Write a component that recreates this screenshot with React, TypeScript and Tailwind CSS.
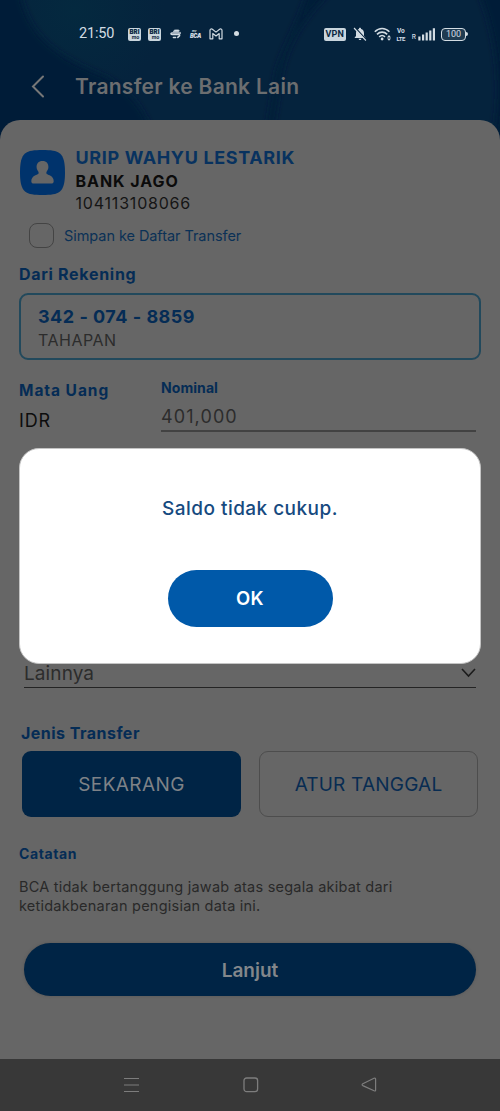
import type { ReactNode } from 'react'

function HeaderBackdrop() {
  return (
    <svg
      className="absolute inset-0 h-full w-full"
      viewBox="0 0 500 150"
      preserveAspectRatio="none"
      aria-hidden="true"
    >
      <defs>
        <filter id="soft" x="-20%" y="-20%" width="140%" height="140%">
          <feGaussianBlur stdDeviation="3" />
        </filter>
        <radialGradient id="teal" cx="75" cy="10" r="90" gradientUnits="userSpaceOnUse">
          <stop offset="0" stopColor="#04293f" />
          <stop offset="1" stopColor="#05233d" />
        </radialGradient>
      </defs>
      <rect width="500" height="150" fill="url(#teal)" />
      <g filter="url(#soft)">
        <path d="M-20 -20H18C24 32 50 54 104 76C130 90 150 112 160 160H-20Z" fill="#061f39" />
        <path d="M308 -10H332C304 16 288 44 282 72L268 160H262L276 72C284 44 300 20 308 -10Z" fill="#061e38" />
        <path d="M478 -10H520V160H488C504 100 500 44 478 -10Z" fill="#061d37" />
      </g>
    </svg>
  )
}

function BriIcon() {
  return (
    <div className="flex h-[13px] w-[13px] flex-col items-center justify-center rounded-[2px] bg-[#c9d5dd] text-[#0b2740]">
      <span className="text-[6px] leading-[6px] font-black">BRI</span>
      <span className="ml-[2px] text-[5px] leading-[5px] font-bold">mo</span>
    </div>
  )
}

function StatusBar() {
  return (
    <div className="relative flex h-[68px] items-center text-[#d3dce3]">
      <span className="ml-[79px] w-[49px] font-[family-name:Roboto] text-[14.5px] leading-5 tracking-[-0.2px]">
        21:50
      </span>
      <div className="flex items-center">
        <BriIcon />
        <div className="ml-[7px]">
          <BriIcon />
        </div>
        <svg className="ml-[9px]" width="11" height="10" viewBox="0 0 11 10" fill="none" stroke="currentColor">
          <path d="M3.4 2.6C3.8 1.2 4.8 1 6 1H8.2C9.6 1 9.5 2.5 8.4 2.6Z" fill="currentColor" strokeWidth=".8" />
          <path d="M8.6 4H2C.5 4.1.4 5.5 2 5.6H8.2C10 5.6 10.4 4.6 10 3.4" strokeWidth="1.3" strokeLinecap="round" />
          <path d="M3.4 8.4H5.6M7.8 8.4L9.6 6.6" strokeWidth="1.5" strokeLinecap="round" />
        </svg>
        <div className="ml-[9px] flex w-3 flex-col italic">
          <span className="ml-[2px] text-[3px] leading-[3px] font-bold">my</span>
          <span className="text-[5.5px] leading-[6px] font-black tracking-[-0.3px]">BCA</span>
        </div>
        <svg className="ml-[7px]" width="14" height="12" viewBox="0 0 14 12" fill="none" stroke="currentColor" strokeWidth="1.2" strokeLinejoin="round">
          <path d="M1 10.8V2.4C1 .9 2.5.6 3.4 1.3L7 4.1L10.6 1.3C11.5.6 13 .9 13 2.4V10.8H10.2V5.5L7 8L3.8 5.5V10.8Z" />
        </svg>
        <div className="mb-px ml-[11px] h-[5px] w-[5px] rounded-full bg-current" />
      </div>
      <div className="ml-auto flex items-center pr-[32px]">
        <div className="flex h-[13px] w-[22px] items-center justify-center rounded-[2px] bg-[#c9d5dd] font-[family-name:Roboto] text-[9px] leading-none font-bold tracking-[0.2px] text-[#0b2740]">
          VPN
        </div>
        <svg className="ml-[7px]" width="14" height="14" viewBox="0 0 14 14">
          <path d="M7 .8C7.8.8 8 1.2 8.1 1.9C10 2.4 11 4 11 6V9L12.3 10.5V11H1.7V10.5L3 9V6C3 4 4 2.4 5.9 1.9C6 1.2 6.2.8 7 .8Z" fill="currentColor" />
          <path d="M5.6 11.8H8.4C8.3 13.5 5.7 13.5 5.6 11.8Z" fill="currentColor" />
          <path d="M2 .6L13.6 13" stroke="#05233d" strokeWidth="1.4" />
          <path d="M1 1L12.9 13.5" stroke="currentColor" strokeWidth="1.1" />
        </svg>
        <svg className="mb-px ml-[7px]" width="18" height="14" viewBox="0 0 18 14" fill="none" stroke="currentColor" strokeWidth="1.6">
          <path d="M.8 4.8C5 .4 11.2.4 15.4 4.8M3 7.4C6 4.4 10.2 4.4 13.2 7.4M5.2 9.9C7 8.2 9.2 8.2 11 9.9" />
          <circle cx="8.1" cy="12" r="1.4" fill="currentColor" stroke="none" />
          <path d="M13 10.4L15 8L17 10.4ZM13 11.4L15 13.8L17 11.4Z" fill="currentColor" stroke="none" />
        </svg>
        <div className="ml-[4px] flex w-[10px] flex-col items-center font-[family-name:Roboto] font-bold">
          <span className="text-[6.5px] leading-[8px]">Vo</span>
          <span className="text-[6px] leading-[7px] tracking-[-0.4px]">LTE</span>
        </div>
        <span className="mt-[7px] ml-[6px] text-[6.5px] leading-none font-medium">R</span>
        <svg className="ml-[2px]" width="17" height="13" viewBox="0 0 17 13" fill="currentColor">
          <path d="M.3 8.5H2.5V12.5H.3ZM4 6.5H6.2V12.5H4ZM7.6 4.6H9.8V12.5H7.6ZM11.2 2.5H13.4V12.5H11.2ZM14.8.3H17V12.5H14.8Z" />
        </svg>
        <div className="ml-[6px] flex h-[13px] w-[25px] items-center justify-center rounded-[4px] border border-current bg-[#1f3b51] font-[family-name:Roboto] text-[9px] leading-none">
          100
        </div>
        <div className="h-1 w-[2px] rounded-r bg-current" />
      </div>
    </div>
  )
}

function SectionLabel({ children, className }: { children: ReactNode; className: string }) {
  return <h2 className={`leading-5 font-bold text-[#052c55] ${className}`}>{children}</h2>
}

function Recipient() {
  return (
    <div className="flex h-[67px]">
      <svg className="mt-[3px] ml-[20px]" width="45" height="45" viewBox="0 0 45 45">
        <path d="M22.5 0C39 0 45 2 45 22.5S39 45 22.5 45S0 43 0 22.5S6 0 22.5 0Z" fill="#00336c" />
        <path d="M22.5 11C26.5 11 28.6 13.6 28.4 17.2C28.3 19.3 27.4 20.5 26.6 21.7C25.8 24 27 24.2 29.6 25.2C32.3 26.3 33.7 28.5 33.7 31.3C33.7 33 32.8 33.6 31 33.6H14C12.2 33.6 11.3 33 11.3 31.3C11.3 28.5 12.7 26.3 15.4 25.2C18 24.2 19.2 24 18.4 21.7C17.6 20.5 16.7 19.3 16.6 17.2C16.4 13.6 18.5 11 22.5 11Z" fill="#666" />
      </svg>
      <div className="ml-[10.5px]">
        <p className="text-[18px] leading-[22px] font-bold tracking-[0.64px] text-[#08325f]">URIP WAHYU LESTARIK</p>
        <p className="mt-[1px] text-[16px] leading-[22px] font-bold tracking-[0.95px] text-[#0b0b0b]">BANK JAGO</p>
        <p className="text-[16px] leading-[22px] tracking-[0.8px] text-[#151515]">104113108066</p>
      </div>
    </div>
  )
}

function TransferForm() {
  return (
    <main className="relative h-[939px] rounded-t-[20px] bg-[#666] pt-[27px]">
      <Recipient />
      <label className="mt-[9px] ml-[29px] flex h-[25px] items-center">
        <span className="h-[25px] w-[25px] rounded-[8px] border border-[#444]" />
        <span className="ml-[10px] text-[14.5px] leading-5 tracking-[-0.06px] text-[#0b3156]">Simpan ke Daftar Transfer</span>
      </label>

      <SectionLabel className="mt-[16px] ml-[19px] text-[16px] tracking-[0.7px]">Dari Rekening</SectionLabel>
      <div className="mx-[19px] mt-[9px] h-[67px] rounded-[9px] border-2 border-[#22495c] pt-[10px] pl-[17px]">
        <p className="text-[18px] leading-6 font-bold tracking-[0.5px] text-[#052c55]">342 - 074 - 8859</p>
        <p className="mt-[-1px] text-[16px] leading-6 tracking-[0.5px] text-[#2c2c2c]">TAHAPAN</p>
      </div>

      <div className="flex h-[72px] pt-[18px] pl-[19px]">
        <div className="w-[142px]">
          <SectionLabel className="mt-[3px] text-[15.5px] tracking-[0.95px]">Mata Uang</SectionLabel>
          <p className="mt-[8px] text-[18px] leading-6 tracking-[0.9px] text-[#0d0d0d]">IDR</p>
        </div>
        <div className="h-[54px] w-[315px] border-b-2 border-[#424242]">
          <SectionLabel className="text-[14px] tracking-[0.07px]">Nominal</SectionLabel>
          <p className="mt-[7px] text-[18px] leading-6 tracking-[1.1px] text-[#2c2c2c]">401,000</p>
        </div>
      </div>

      <div className="mt-[229px] mr-[24px] ml-[24px] flex h-[27px] items-start justify-between border-b border-[#242424]">
        <span className="mt-px text-[19px] leading-6 tracking-[0.1px] text-[#2c2c2c]">Lainnya</span>
        <svg className="mt-[7px]" width="15" height="10" viewBox="0 0 15 10" fill="none" stroke="#1c1c1c" strokeWidth="1.6">
          <path d="M1 1L7.5 8L14 1" />
        </svg>
      </div>

      <SectionLabel className="mt-[35px] ml-[21px] text-[16px] tracking-[0.47px]">Jenis Transfer</SectionLabel>
      <div className="mt-[8px] mr-[22px] ml-[22px] flex h-[66px] gap-[18px] text-[19px]">
        <button className="w-[219px] rounded-[9px] bg-[#002445] pt-[3px] tracking-[0.4px] text-[#7e8287]">SEKARANG</button>
        <button className="w-[219px] rounded-[9px] border border-[#4d4d4d] pt-[3px] tracking-[0.2px] text-[#082c52]">ATUR TANGGAL</button>
      </div>

      <SectionLabel className="mt-[27px] ml-[19px] text-[14px] tracking-[0.6px]">Catatan</SectionLabel>
      <p className="mt-[13px] ml-[19px] text-[14.5px] leading-[19px] tracking-[0.23px] text-[#292929]">
        BCA tidak bertanggung jawab atas segala akibat dari
        <br />
        ketidakbenaran pengisian data ini.
      </p>

      <button className="mt-[28px] ml-[24px] h-[53px] w-[452px] rounded-full bg-[#002445] pt-[3px] text-[19px] font-semibold text-[#83878b] shadow-[0_0_3px_#555]">
        Lanjut
      </button>
    </main>
  )
}

function NavigationBar() {
  return (
    <nav className="flex h-[52px] items-center bg-[#383838] pl-[124px]">
      <svg width="15" height="16" viewBox="0 0 15 16" stroke="#7d7d7d" strokeWidth="1.2">
        <path d="M0 1.5H15M0 8H15M0 14.5H15" />
      </svg>
      <svg className="ml-[104px]" width="16" height="16" viewBox="0 0 16 16" fill="none" stroke="#7d7d7d" strokeWidth="1.3">
        <rect x="1" y="1" width="13.6" height="13.6" rx="2.6" />
      </svg>
      <svg className="ml-[102px]" width="16" height="16" viewBox="0 0 16 16" fill="none" stroke="#7d7d7d" strokeWidth="1.2">
        <path d="M13 1.3Q14.6.7 14.6 2.3V12.9Q14.6 14.4 13.1 13.8L1.8 8.6Q.4 7.7 1.8 6.8Z" />
      </svg>
    </nav>
  )
}

function InsufficientBalanceDialog() {
  return (
    <div
      role="alertdialog"
      className="absolute top-[448px] left-[19px] flex h-[216px] w-[462px] flex-col items-center rounded-[20px] border border-[#c4c4c4] bg-white pt-[48px]"
    >
      <p className="text-[19px] leading-6 font-medium tracking-[0.46px] text-[#164a80]">Saldo tidak cukup.</p>
      <button className="mt-[49px] h-[57px] w-[165px] rounded-full bg-[#0059a9] pt-px text-[18.5px] font-semibold tracking-[0.3px] text-white">
        OK
      </button>
    </div>
  )
}

export default function App() {
  return (
    <div className="relative h-[1111px] w-[500px] overflow-hidden font-[Inter,sans-serif]">
      <div className="absolute top-0 left-0 h-[150px] w-full">
        <HeaderBackdrop />
      </div>
      <StatusBar />
      <header className="relative flex h-[52px] items-start">
        <svg className="mt-[7px] ml-[31px]" width="14" height="23" viewBox="0 0 14 23" fill="none" stroke="#777" strokeWidth="2" strokeLinecap="round">
          <path d="M12 1.5L2 11.5L12 21.5" />
        </svg>
        <h1 className="mt-[7px] ml-[30px] text-[21px] leading-6 font-semibold tracking-[0.28px] text-[#6c6e70]">
          Transfer ke Bank Lain
        </h1>
      </header>
      <TransferForm />
      <NavigationBar />
      <InsufficientBalanceDialog />
    </div>
  )
}
